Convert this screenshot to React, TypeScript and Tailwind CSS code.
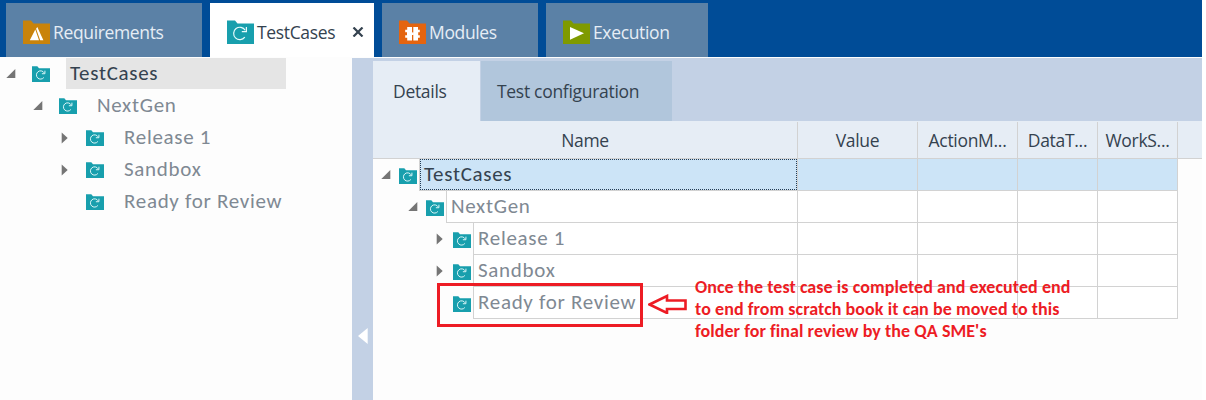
import React from "react";

const TEAL = "#189fad";

function Folder({ kind, small = false }: { kind: "test" | "req" | "mod" | "exec"; small?: boolean }) {
  const fill = { test: TEAL, req: "#c9830b", mod: "#e4640f", exec: "#7f9a00" }[kind];
  const size = small ? "w-[18px] h-4" : "w-[27px] h-6";
  return (
    <svg viewBox="0 0 27 24" preserveAspectRatio="none" className={`block shrink-0 ${size}`}>
      <path d="M0 0.5H8L10.5 3.5H27V24H0Z" fill={fill} />
      {kind === "test" && (
        <g fill="none" stroke="#e8fbfc" strokeWidth={small ? 1.4 : 1.2}>
          <path d="M17.8 17.2A6.2 6.2 0 1 1 18.2 10.3" />
          <path d="M19.4 7V11.6H14.8" />
        </g>
      )}
      {kind === "req" && <path d="M6.8 20.2L12.3 9.6L16 20.2ZM13.1 8.7L14.3 7L20.4 20.2H17.2Z" fill="#fff" />}
      {kind === "mod" && (
        <g fill="#fff">
          <path d="M8.2 7H13V20.5H8.2V17.8H6.2V15.2H8V12.2H6.2V9.8H8.2Z" />
          <path d="M14.3 7H19V9.8H20.8V12.2H19.2V15.2H20.8V17.8H19V20.5H14.3Z" />
          <path d="M12.5 12.4H14.8V15H12.5Z" />
        </g>
      )}
      {kind === "exec" && <path d="M7 7L21 13.3L7 19.7Z" fill="#fff" />}
    </svg>
  );
}

function Toggle({ state }: { state: "open" | "closed" | "none" }) {
  return (
    <svg viewBox="0 0 10 12" className="block h-3 w-2.5 shrink-0">
      {state === "open" && <path d="M9.3 1V10H0.3Z" fill="#757575" />}
      {state === "closed" && <path d="M1.7 0.5L7.7 6L1.7 11.5Z" fill="#757575" />}
    </svg>
  );
}

function Tab({ label, kind, width, active = false }: { label: string; kind: "test" | "req" | "mod" | "exec"; width: string; active?: boolean }) {
  return (
    <div className={`flex h-[54px] items-center pl-[17px] ${width} ${active ? "bg-white text-[#34424f]" : "bg-[#5b81a6] text-[#e6edf5]"}`}>
      <div className="pt-1"><Folder kind={kind} /></div>
      <span className="ml-[3px] pt-[3px] text-[17.5px] leading-6 tracking-[-0.35px] whitespace-nowrap">{label}</span>
      {active && (
        <svg viewBox="0 0 12 10" className="mt-[3px] mr-[10px] ml-auto h-[10px] w-3">
          <path d="M1.5 0.5L10.5 9.5M10.5 0.5L1.5 9.5" stroke="#34424f" strokeWidth="2.2" />
        </svg>
      )}
    </div>
  );
}

type Row = { label: string; state: "open" | "closed" | "none"; tree: string; grid: string };
const rows: Row[] = [
  { label: "TestCases", state: "open", tree: "pl-[6px]", grid: "pl-[8px]" },
  { label: "NextGen", state: "open", tree: "pl-[33px]", grid: "pl-[35px]" },
  { label: "Release 1", state: "closed", tree: "pl-[60px]", grid: "pl-[62px]" },
  { label: "Sandbox", state: "closed", tree: "pl-[60px]", grid: "pl-[62px]" },
  { label: "Ready for Review", state: "none", tree: "pl-[60px]", grid: "pl-[62px]" },
];

const treeText = "font-['Carlito','Lato',sans-serif] font-normal text-[21px] tracking-[0.7px] whitespace-pre";

export default function App() {
  return (
    <div className="relative flex h-[400px] w-[1202px] flex-col overflow-hidden bg-[#fdfdfd] font-['Open_Sans',sans-serif]">
      <header className="flex h-[57px] shrink-0 gap-2 bg-[#004c97] pl-1.5 pt-[3px]">
        <Tab label="Requirements" kind="req" width="w-[196px]" />
        <Tab label="TestCases" kind="test" width="w-[164px]" active />
        <Tab label="Modules" kind="mod" width="w-[156px]" />
        <Tab label="Execution" kind="exec" width="w-[162px]" />
      </header>
      <div className="flex min-h-0 flex-1 pt-px">
        <aside className="w-[352px] shrink-0">
          {rows.map((r, i) => (
            <div key={r.label} className={`flex h-8 w-[286px] items-start ${r.tree}`}>
              <div className="pt-[10px]"><Toggle state={r.state} /></div>
              <div className="ml-4 pt-2"><Folder kind="test" small /></div>
              <div className={`ml-4 h-[31px] flex-1 pl-1 leading-[31px] ${treeText} ${i === 0 ? "bg-[#e5e5e5] text-[#34424f]" : "text-[#7f8993]"}`}>{r.label}</div>
            </div>
          ))}
        </aside>
        <div className="w-[21px] shrink-0 bg-[#c3d1e5] pl-1.5 pt-[270px]">
          <svg viewBox="0 0 10 16" className="block h-4 w-2.5"><path d="M9.7 0V16L0 8Z" fill="#fff" /></svg>
        </div>
        <main className="flex flex-1 flex-col">
          <div className="flex h-[63px] shrink-0 bg-[#c3d1e5] pt-[3px] text-[17.5px] tracking-[-0.3px] text-[#34424f]">
            <div className="w-[107px] bg-[#e6edf5] pl-5 leading-[61px]">Details</div>
            <div className="w-[192px] border-l border-[#c3d1e5] bg-[#b1c6dc] pl-4 leading-[61px]">Test configuration</div>
          </div>
          <div className="flex h-[38px] shrink-0 border-b border-[#d2d2d2] bg-[#e6edf5] pt-px text-center text-[17.5px] tracking-[-0.3px] leading-[37px] text-[#34424f]">
            <div className="w-[425px] border-r border-[#d2d2d2]">Name</div>
            <div className="w-[120px] border-r border-[#d2d2d2]">Value</div>
            <div className="w-[100px] border-r border-[#d2d2d2]">ActionM...</div>
            <div className="w-[80px] border-r border-[#d2d2d2]">DataT...</div>
            <div className="w-[80px] border-r border-[#d2d2d2]">WorkS...</div>
          </div>
          {rows.map((r, i) => (
            <div key={r.label} className="flex h-8 w-[805px] shrink-0">
              <div className={`flex w-[425px] items-start ${r.grid}`}>
                <div className="pt-[10px]"><Toggle state={r.state} /></div>
                <div className="ml-2 pt-[9px]"><Folder kind="test" small /></div>
                <div className={`ml-[2px] h-8 flex-1 border-b border-l border-r border-[#d2d2d2] ${i === 0 ? "bg-[#cce4f7] text-[#34424f]" : "bg-white text-[#7f8993]"}`}>
                  <div className={`${treeText} ${i === 0 ? "h-[31px] border border-dotted border-[#233c55] pl-[3px] leading-[29px]" : "pl-1 leading-[31px]"}`}>{r.label}</div>
                </div>
              </div>
              {["w-[120px]", "w-[100px]", "w-[80px]", "w-[80px]"].map((w, j) => (
                <div key={j} className={`${w} border-b border-r border-[#d2d2d2] ${i === 0 ? "bg-[#cce4f7]" : "bg-white"}`} />
              ))}
            </div>
          ))}
        </main>
      </div>
      <div className="absolute left-[437px] top-[283px] h-11 w-[206px] border-3 border-[#ed1c24]" />
      <svg viewBox="0 0 40 20" className="absolute left-[648px] top-[294px] h-5 w-10">
        <path d="M1.5 10.5L19 2V6.5H37.5V15H19V19Z" fill="#fff" stroke="#ed1c24" strokeWidth="2.6" />
      </svg>
      <div className="absolute left-[695px] top-[276px] whitespace-pre font-['Carlito','Lato',sans-serif] text-[18px] font-bold leading-[22px] tracking-[0.07px] text-[#ed1c24]">
        <div>Once the test case is completed and executed end</div>
        <div>to end from scratch book it can be moved to this</div>
        <div>folder for final review by the QA SME's</div>
      </div>
    </div>
  );
}
